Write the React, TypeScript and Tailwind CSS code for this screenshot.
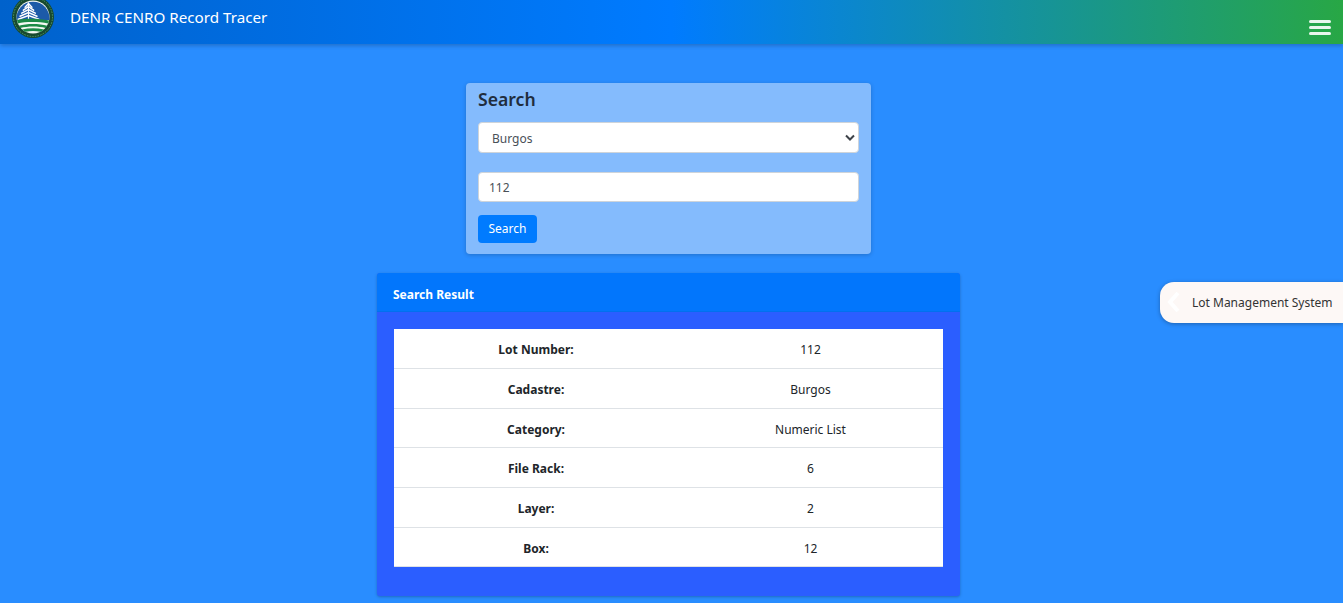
import React from "react";

const rows: [string, string][] = [
  ["Lot Number:", "112"],
  ["Cadastre:", "Burgos"],
  ["Category:", "Numeric List"],
  ["File Rack:", "6"],
  ["Layer:", "2"],
  ["Box:", "12"],
];

function Logo() {
  const fronds = [10, 13, 16, 19, 22];
  return (
    <svg width="42" height="42" viewBox="0 0 42 42" className="block">
      <circle cx="21" cy="21" r="21" fill="#17492f" />
      <circle cx="21" cy="21" r="19.5" fill="none" stroke="#4f9a68" strokeWidth="1" strokeDasharray="1.5 1.2" />
      <circle cx="21" cy="21" r="16.5" fill="#f4f8f2" />
      <path d="M4.6 24H37.4A16.5 16.5 0 1 0 4.6 24Z" fill="#1c5aa8" />
      <g stroke="#ffffff" strokeWidth="1.5" strokeLinecap="round" fill="none">
        {fronds.map((y, i) => (
          <path key={y} d={`M${16.5 - (i + 2) * 1.7} ${y + 1.2}L16.5 ${y - 2.4}L${16.5 + (i + 2) * 1.7} ${y + 1.2}`} />
        ))}
      </g>
      <path d="M16.5 6.5V24" stroke="#ffffff" strokeWidth="1.2" />
      <path d="M5 24C13 22.3 28 22.5 37 24.5A16.5 16.5 0 0 1 36.2 27.5C27 25.8 14 25.5 5.8 27.5Z" fill="#1c8a45" />
      <path d="M6.8 29.8C15 27.4 27 27.4 35.2 29.8L33.8 32C26 30 16 30 8.2 32Z" fill="#1c8a45" />
      <path d="M10 33.6C17 31.9 25 31.9 32 33.6A16.5 16.5 0 0 1 28.5 35.8C24 34.6 18 34.6 13.5 35.8Z" fill="#1c8a45" />
    </svg>
  );
}

export default function App() {
  return (
    <div className="relative min-h-[603px] overflow-hidden bg-[#298dff] font-['Noto_Sans','Open_Sans',sans-serif] text-[#212529]">
      <header className="flex h-[44px] items-start bg-[linear-gradient(90deg,#0062cc_0%,#007bff_50%,#28a745_100%)] shadow-[0_2px_4px_rgba(0,0,0,0.2)]">
        <div className="ml-3 -mt-[4px]">
          <Logo />
        </div>
        <span className="ml-[16px] mt-[7px] text-[15.2px] leading-[21px] text-white">DENR CENRO Record Tracer</span>
        <div className="ml-auto mr-3 mt-[20px] flex w-[22px] flex-col gap-[3px]">
          <span className="h-[3px] rounded-sm bg-white/90" />
          <span className="h-[3px] rounded-sm bg-white/90" />
          <span className="h-[3px] rounded-sm bg-white/90" />
        </div>
      </header>

      <main className="flex flex-col items-center pt-[39px] pr-[6px] pb-[6px]">
        <section className="h-[171px] w-[405px] rounded bg-[#84bbfd] px-3 shadow-[0_1px_4px_rgba(0,0,0,0.2)]">
          <h2 className="pt-[4px] text-[17.6px] leading-[25px] font-semibold text-[#212d3d]">Search</h2>
          <div className="relative mt-[10px]">
            <select
              defaultValue="Burgos"
              className="block h-[31px] w-full appearance-none rounded border border-[#ced4da] bg-white pt-[2px] pl-[13px] text-[12px] text-[#495057]"
            >
              <option>Burgos</option>
            </select>
            <svg width="12" height="12" viewBox="0 0 12 12" className="absolute right-[3px] top-[10px]">
              <path d="M2 3.5L6 7.5L10 3.5" fill="none" stroke="#3d4248" strokeWidth="2" />
            </svg>
          </div>
          <input
            defaultValue="112"
            className="mt-[19px] block h-[30px] w-full rounded border border-[#ced4da] bg-white px-[10px] text-[12px] text-[#495057]"
          />
          <button className="mt-[13px] block h-[28px] w-[59px] rounded bg-[#007bff] text-[12px] text-white">Search</button>
        </section>

        <section className="mt-[19px] w-[583px] overflow-hidden rounded-[3px] bg-[#2b5eff] shadow-[0_1px_3px_rgba(0,0,0,0.25)]">
          <div className="flex h-[39px] items-center border-b border-black/5 bg-[#0276fc] pt-[5px] pl-4 text-[12px] font-bold text-white">
            Search Result
          </div>
          <div className="px-[17px] pt-[17px] pb-[29px]">
            <table className="w-full border-collapse bg-white text-[12px]">
              <tbody>
                {rows.map(([k, v]) => (
                  <tr key={k} className="h-[39.67px] border-b border-[#dee2e6]">
                    <td className="w-[284px] pt-[3px] text-center font-bold text-[#212529]">{k}</td>
                    <td className="pt-[3px] text-center text-[#212529]">{v}</td>
                  </tr>
                ))}
              </tbody>
            </table>
          </div>
        </section>
      </main>

      <aside className="absolute right-0 top-[282px] flex h-[41px] w-[183px] items-center rounded-l-[14px] bg-[#fdf8f6] pl-[32px] text-[12px] text-[#333] shadow-[0_1px_4px_rgba(0,0,0,0.3)]">
        <svg width="14" height="22" viewBox="0 0 14 22" className="absolute left-[7px] top-[9px]">
          <path d="M11 2L3 11L11 20" fill="none" stroke="#ffffff" strokeWidth="4" />
        </svg>
        Lot Management System
      </aside>
    </div>
  );
}
